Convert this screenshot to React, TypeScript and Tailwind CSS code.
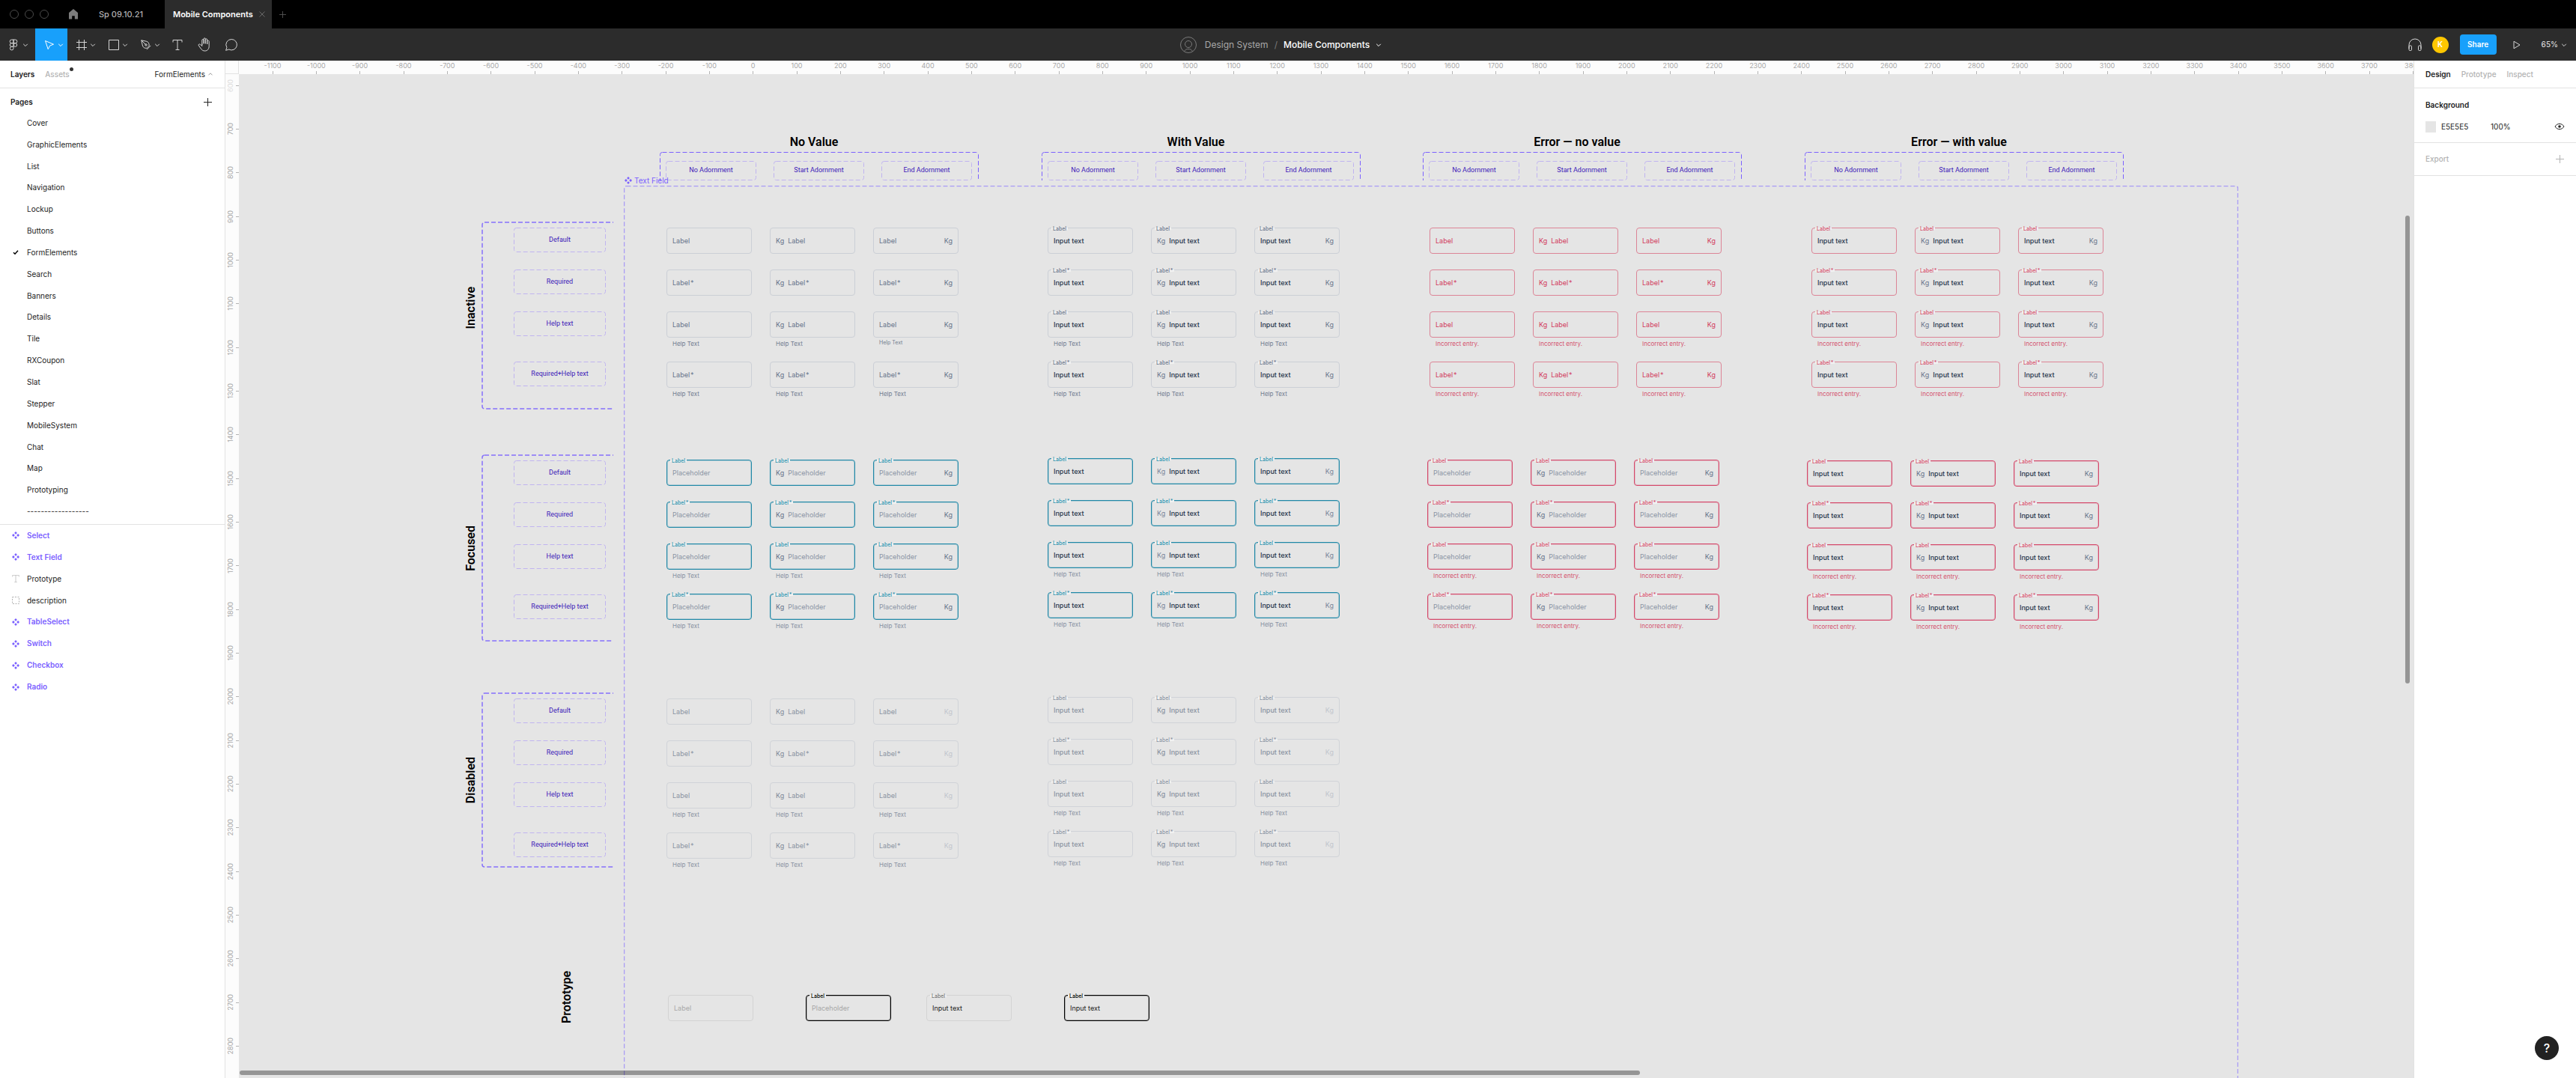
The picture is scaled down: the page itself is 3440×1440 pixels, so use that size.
import React from "react";

const INTER = "font-['Inter','Liberation_Sans',sans-serif]";

/* ---------- icons ---------- */

function Chevron({ className = "", up = false }: { className?: string; up?: boolean }) {
  return (
    <svg viewBox="0 0 8 8" className={"h-2 w-2 shrink-0 " + className} fill="none" stroke="currentColor">
      <path d={up ? "M1.5 5.3 4 2.8l2.5 2.5" : "M1.2 2.8 4 5.6l2.8-2.8"} />
    </svg>
  );
}

function HomeIcon() {
  return (
    <svg viewBox="0 0 14 14" className="h-3.5 w-3.5" fill="currentColor">
      <path d="M7 0 1 5v8.6h4.2V9.2h3.6v4.4H13V5z" />
    </svg>
  );
}

function FigmaIcon() {
  return (
    <svg viewBox="0 0 12 16" className="h-4 w-3" fill="none" stroke="currentColor">
      <path d="M6 1H3.5a2.3 2.3 0 0 0 0 4.7H6zM6 1h2.5a2.3 2.3 0 0 1 0 4.7H6zM6 5.7H3.5a2.3 2.3 0 0 0 0 4.6H6zM6 10.3H3.5A2.3 2.3 0 1 0 6 12.7z" />
      <circle cx="8.4" cy="8" r="2.3" />
    </svg>
  );
}

function MoveIcon() {
  return (
    <svg viewBox="0 0 14 14" className="h-3.5 w-3.5" fill="none" stroke="currentColor" strokeLinejoin="round">
      <path d="M1.5 1.5 12.5 6.2 7.6 8.1 5.2 12.7z" />
    </svg>
  );
}

function FrameIcon() {
  return (
    <svg viewBox="0 0 14 14" className="h-3.5 w-3.5" fill="none" stroke="currentColor">
      <path d="M3.5 0v14M10.5 0v14M0 3.5h14M0 10.5h14" />
    </svg>
  );
}

function ShapeIcon() {
  return (
    <svg viewBox="0 0 14 14" className="h-3.5 w-3.5" fill="none" stroke="currentColor">
      <path d="M.5.5h13v13H.5z" />
    </svg>
  );
}

function PenIcon() {
  return (
    <svg viewBox="0 0 14 14" className="h-3.5 w-3.5" fill="none" stroke="currentColor" strokeLinejoin="round">
      <path d="M.8.8 7.8 2.3c2.4.6 3.6 3 3.3 5.9L8.3 11.3c-3 .4-5.2-.8-5.9-3.3zM.8.8l5.4 5.4M8 13.2l5.3-5.3" />
      <circle cx="7" cy="7" r="1.2" />
    </svg>
  );
}

function TypeIcon({ className = "h-3.5 w-3.5" }: { className?: string }) {
  return (
    <svg viewBox="0 0 14 14" className={className} fill="none" stroke="currentColor">
      <path d="M1 3.5v-3h12v3M7 .5v13M4.5 13.5h5" />
    </svg>
  );
}

function HandIcon() {
  return (
    <svg viewBox="0 0 18 19" className="h-[19px] w-[18px]" fill="none" stroke="currentColor" strokeLinecap="round" strokeLinejoin="round">
      <path d="M5.8 9.5V3.7c0-1.6 2.3-1.6 2.3 0v4.6V2c0-1.6 2.3-1.6 2.3 0v6.3V3c0-1.6 2.3-1.6 2.3 0v6V5.3c0-1.6 2.5-1.5 2.5.1v6.2c0 3.9-2.2 6.4-5.6 6.4-2.6 0-4-1.1-5.2-2.9L1.3 10.9c-.9-1.5 1.1-2.7 2.3-1.5l2.2 2.2V9" />
    </svg>
  );
}

function CommentIcon() {
  return (
    <svg viewBox="0 0 18 18" className="h-[18px] w-[18px]" fill="none" stroke="currentColor" strokeLinejoin="round">
      <path d="M9.2 1.5a7.2 7.2 0 1 1-3.5 13.5L1.6 16.3 2.9 12.5A7.2 7.2 0 0 1 9.2 1.5z" />
    </svg>
  );
}

function PersonIcon() {
  return (
    <svg viewBox="0 0 24 24" className="h-6 w-6" fill="none" stroke="currentColor">
      <circle cx="12" cy="12" r="10.5" />
      <circle cx="12" cy="11" r="4.5" />
      <path d="M6.5 20.8c1.2-2.6 3-3.3 5.5-3.3s4.3.7 5.5 3.3" />
    </svg>
  );
}

function HeadphonesIcon() {
  return (
    <svg viewBox="0 0 18 18" className="h-[18px] w-[18px]" fill="none" stroke="currentColor">
      <path d="M1 14V9a8 8 0 0 1 16 0v5" />
      <rect x="1" y="10" width="3.5" height="6.5" rx="1.2" />
      <rect x="13.5" y="10" width="3.5" height="6.5" rx="1.2" />
    </svg>
  );
}

function PlayIcon() {
  return (
    <svg viewBox="0 0 10 12" className="h-3 w-2.5" fill="none" stroke="currentColor" strokeLinejoin="round">
      <path d="M1 1.2v9.6L9 6z" />
    </svg>
  );
}

function EyeIcon() {
  return (
    <svg viewBox="0 0 14 10" className="h-2.5 w-3.5" fill="none" stroke="currentColor">
      <path d="M1 5c2.7-4.8 9.3-4.8 12 0-2.7 4.8-9.3 4.8-12 0z" />
      <circle cx="7" cy="5" r="1.8" fill="currentColor" stroke="none" />
    </svg>
  );
}

function PlusIcon({ className = "h-[11px] w-[11px]" }: { className?: string }) {
  return (
    <svg viewBox="0 0 11 11" className={className} fill="none" stroke="currentColor">
      <path d="M5.5 0v11M0 5.5h11" />
    </svg>
  );
}

function CloseIcon() {
  return (
    <svg viewBox="0 0 8 8" className="h-2 w-2" fill="none" stroke="currentColor">
      <path d="m.5.5 7 7M7.5.5l-7 7" />
    </svg>
  );
}

function CheckIcon() {
  return (
    <svg viewBox="0 0 8 8" className="h-2 w-2" fill="none" stroke="currentColor" strokeWidth="1.5">
      <path d="M1 4.2 3 6.2 7 1.8" />
    </svg>
  );
}

function ComponentSetIcon() {
  return (
    <svg viewBox="0 0 10 10" className="h-2.5 w-2.5 shrink-0" fill="currentColor">
      <path d="M5 0 6.9 1.9 5 3.8 3.1 1.9zM5 6.2 6.9 8.1 5 10 3.1 8.1zM1.9 3.1 3.8 5 1.9 6.9 0 5zM8.1 3.1 10 5 8.1 6.9 6.2 5z" />
    </svg>
  );
}

function GroupIcon() {
  return (
    <svg viewBox="0 0 10 10" className="h-2.5 w-2.5" fill="none" stroke="currentColor" strokeDasharray="2 1.5">
      <path d="M.5.5h9v9h-9z" />
    </svg>
  );
}

/* ---------- top bars ---------- */

function TabBar() {
  return (
    <div className="flex h-[38px] shrink-0 items-stretch bg-black text-[11px] font-medium">
      <div className="flex w-[79px] items-center gap-2 pl-[13px]">
        {["close", "minimise", "zoom"].map((n) => (
          <button key={n} aria-label={n} className="h-3 w-3 rounded-full border border-[#4a4a4a]" />
        ))}
      </div>
      <button aria-label="Home" className="flex w-[38px] items-center justify-center text-[#7c7c7c]">
        <HomeIcon />
      </button>
      <button className="w-[103px] pl-[15px] text-left text-[#b0b0b0]">Sp 09.10.21</button>
      <div className="flex w-[143px] items-center justify-between bg-[#2c2c2c] pr-[9px] pl-[11px] text-white">
        <button className="font-semibold">Mobile Components</button>
        <button aria-label="Close tab" className="text-[#6a6a6a]">
          <CloseIcon />
        </button>
      </div>
      <button aria-label="New tab" className="pl-2.5 text-[#5c5c5c]">
        <PlusIcon className="h-[9px] w-[9px]" />
      </button>
    </div>
  );
}

const dropTools = [
  { name: "Frame", icon: <FrameIcon /> },
  { name: "Shape", icon: <ShapeIcon /> },
  { name: "Pen", icon: <PenIcon /> },
];
const plainTools = [
  { name: "Text", icon: <TypeIcon /> },
  { name: "Hand", icon: <HandIcon /> },
  { name: "Comment", icon: <CommentIcon /> },
];

function Toolbar() {
  return (
    <div className="flex h-[43px] shrink-0 items-stretch bg-[#2c2c2c] text-[#d6d6d6]">
      <div className="flex flex-1 items-stretch">
        <button aria-label="Main menu" className="flex w-[47px] items-center gap-1.5 pl-3">
          <FigmaIcon />
          <Chevron />
        </button>
        <button aria-label="Move" className="flex w-[43px] items-center gap-1 bg-[#18a0fb] pl-3 text-white">
          <MoveIcon />
          <Chevron />
        </button>
        {dropTools.map((t) => (
          <button key={t.name} aria-label={t.name} className="flex w-[43px] items-center gap-1 pl-3">
            {t.icon}
            <Chevron />
          </button>
        ))}
        {plainTools.map((t) => (
          <button key={t.name} aria-label={t.name} className="flex w-9 items-center justify-center">
            {t.icon}
          </button>
        ))}
      </div>
      <div className="flex items-center pr-2 text-xs">
        <span className="text-[#7a7a7a]">
          <PersonIcon />
        </span>
        <a href="#project" className="ml-2.5 text-[#a8a8a8]">Design System</a>
        <span className="mx-2 text-[#7a7a7a]">/</span>
        <button className="flex items-center gap-2 font-medium text-white">
          Mobile Components
          <Chevron />
        </button>
      </div>
      <div className="flex flex-1 items-center justify-end pr-3">
        <button aria-label="Audio">
          <HeadphonesIcon />
        </button>
        <span className="ml-3.5 flex h-[22px] w-[22px] items-center justify-center rounded-full bg-[#ffc700] text-[10px] font-semibold text-white">K</span>
        <button className="ml-[15px] h-[27px] w-[49px] rounded bg-[#18a0fb] text-[10px] font-semibold text-white">Share</button>
        <button aria-label="Present" className="ml-[22px]">
          <PlayIcon />
        </button>
        <button className="ml-7 flex items-center gap-1 text-[10px] font-medium">
          65%
          <Chevron />
        </button>
      </div>
    </div>
  );
}

/* ---------- side panels ---------- */

const pages = [
  "Cover", "GraphicElements", "List", "Navigation", "Lockup", "Buttons", "FormElements", "Search", "Banners",
  "Details", "Tile", "RXCoupon", "Slat", "Stepper", "MobileSystem", "Chat", "Map", "Prototyping", "------------------",
];

const layers: { name: string; kind: "set" | "text" | "group" }[] = [
  { name: "Select", kind: "set" },
  { name: "Text Field", kind: "set" },
  { name: "Prototype", kind: "text" },
  { name: "description", kind: "group" },
  { name: "TableSelect", kind: "set" },
  { name: "Switch", kind: "set" },
  { name: "Checkbox", kind: "set" },
  { name: "Radio", kind: "set" },
];

function LeftPanel() {
  return (
    <aside className="w-[301px] shrink-0 border-r border-[#e2e2e2] bg-white text-[10px] text-[#222]">
      <div className="flex h-[37px] items-center border-b border-[#e2e2e2] pr-[15px] pl-3.5">
        <button className="font-semibold">Layers</button>
        <button className="relative ml-3.5 font-medium text-[#b3b3b3]">
          Assets
          <span className="absolute -top-0.5 -right-[5px] h-[5px] w-[5px] rounded-full bg-[#333]" />
        </button>
        <button className="ml-auto flex items-center gap-[3px]">
          FormElements
          <Chevron up className="text-[#999]" />
        </button>
      </div>
      <div className="border-b border-[#e2e2e2] pb-0.5">
        <div className="flex h-8 items-center justify-between pt-1 pr-[17px] pl-3.5">
          <h2 className="font-semibold">Pages</h2>
          <button aria-label="Add page">
            <PlusIcon />
          </button>
        </div>
        <ul className="grid h-[548px] auto-rows-fr">
          {pages.map((p) => (
            <li key={p} className="flex">
              <button className="flex flex-1 items-center text-left">
                <span className="flex w-9 justify-center pl-1.5 text-black">{p === "FormElements" && <CheckIcon />}</span>
                {p}
              </button>
            </li>
          ))}
        </ul>
      </div>
      <ul className="grid h-[231px] auto-rows-fr">
        {layers.map((l) => (
          <li key={l.name} className="flex">
            <button
              className={l.kind === "set" ? "flex flex-1 items-center font-semibold text-[#7b61ff]" : "flex flex-1 items-center"}
            >
              <span className={l.kind === "set" ? "flex w-9 justify-center pl-1.5" : "flex w-9 justify-center pl-1.5 text-[#b3b3b3]"}>
                {l.kind === "set" && <ComponentSetIcon />}
                {l.kind === "text" && <TypeIcon className="h-2.5 w-2.5" />}
                {l.kind === "group" && <GroupIcon />}
              </span>
              {l.name}
            </button>
          </li>
        ))}
      </ul>
    </aside>
  );
}

function RightPanel() {
  return (
    <aside className="w-[217px] shrink-0 border-l border-[#e2e2e2] bg-white text-[10px] text-[#222]">
      <div className="flex h-[37px] items-center gap-3.5 border-b border-[#e2e2e2] pl-[15px] font-medium text-[#b3b3b3]">
        <button className="font-semibold text-[#222]">Design</button>
        <button>Prototype</button>
        <button>Inspect</button>
      </div>
      <section className="h-[73px] border-b border-[#e2e2e2] pt-3.5 pr-[15px] pl-[15px]">
        <h2 className="leading-4 font-semibold">Background</h2>
        <div className="mt-3 flex h-[18px] items-center">
          <button aria-label="Background colour" className="h-[15px] w-3.5 bg-[#e5e5e5]" />
          <input aria-label="Hex" defaultValue="E5E5E5" className="ml-[7px] w-[66px] bg-transparent" />
          <input aria-label="Opacity" defaultValue="100%" className="w-[50px] bg-transparent" />
          <button aria-label="Toggle visibility" className="ml-auto">
            <EyeIcon />
          </button>
        </div>
      </section>
      <section className="flex h-11 items-center justify-between border-b border-[#e2e2e2] pr-4 pl-[15px] text-[#b3b3b3]">
        <h2 className="font-medium">Export</h2>
        <button aria-label="Add export">
          <PlusIcon />
        </button>
      </section>
    </aside>
  );
}

/* ---------- rulers ---------- */

const RULER_STEP = 175 / 3;
const range = (from: number, to: number) => Array.from({ length: (to - from) / 100 + 1 }, (_, i) => from + i * 100);

function HorizontalRuler() {
  return (
    <div className="relative h-[18px] flex-1 overflow-hidden bg-[#fcfcfc] text-[9px] leading-3.5 text-[#a8a8a8]">
      {range(-1100, 3800).map((v, i) => (
        <div key={v} className="absolute inset-y-0 flex w-10 -translate-x-1/2 flex-col items-center justify-between" style={{ left: 45 + i * RULER_STEP }}>
          {v}
          <span className="h-1 w-px bg-[#b3b3b3]" />
        </div>
      ))}
    </div>
  );
}

function VerticalRuler() {
  return (
    <div className="relative w-[18px] shrink-0 overflow-hidden bg-[#fcfcfc] text-[9px] leading-3.5 text-[#a8a8a8]">
      {range(600, 2800).map((v, i) => (
        <div key={v} className="absolute inset-x-0 flex h-10 -translate-y-1/2 items-center justify-between" style={{ top: 15 + i * RULER_STEP }}>
          <span className={v === 600 ? "rotate-180 text-[#dcdcdc] [writing-mode:vertical-rl]" : "rotate-180 [writing-mode:vertical-rl]"}>{v}</span>
          <span className="h-px w-1 bg-[#b3b3b3]" />
        </div>
      ))}
    </div>
  );
}

/* ---------- canvas ---------- */

function Dashed({ shape, className, heavy = false }: { shape: "box" | "top" | "left"; className: string; heavy?: boolean }) {
  return (
    <svg
      className={"pointer-events-none absolute inset-0 h-full w-full overflow-hidden " + className}
      fill="none"
      stroke="currentColor"
      strokeWidth={heavy ? 1.5 : 1}
      strokeDasharray="6 3"
    >
      {shape === "box" && <rect x="0.5" y="0.5" width="calc(100% - 1px)" height="calc(100% - 1px)" rx="3" />}
      {shape === "top" && <rect x="0.5" y="0.5" width="calc(100% - 1px)" height="200%" rx="3" />}
      {shape === "left" && <rect x="1" y="1" width="200%" height="calc(100% - 2px)" rx="3" />}
    </svg>
  );
}

function Chip({ children, className }: { children: React.ReactNode; className: string }) {
  return (
    <div className={"relative flex items-center justify-center text-[9px] text-[#3c18b8] " + className}>
      <Dashed shape="box" className="text-[#c0b4f0]" />
      {children}
    </div>
  );
}

function ColumnHeader({ title, x, y }: { title: string; x: number; y: number }) {
  return (
    <div className="absolute w-[426px] font-['Roboto',sans-serif]" style={{ left: x, top: y }}>
      <h3 className="mb-[3px] pr-3.5 text-center text-base leading-5 font-semibold text-black">{title}</h3>
      <div className="relative flex h-[38px] gap-[23px] pt-3 pl-2">
        <Dashed shape="top" className="text-[#7b61ff]" />
        {["No Adornment", "Start Adornment", "End Adornment"].map((t) => (
          <Chip key={t} className="h-[26px] w-[121px]">{t}</Chip>
        ))}
      </div>
    </div>
  );
}

const ROWS = "grid-rows-[56px_56px_67px_auto]";

function RowHeader({ title, x, y, size, labelClass = "" }: { title: string; x: number; y: number; size: string; labelClass?: string }) {
  return (
    <div className={"absolute flex items-center gap-1 font-['Roboto',sans-serif] " + size} style={{ left: x, top: y }}>
      <h3 className={"w-5 rotate-180 text-center text-base leading-5 font-semibold text-black [writing-mode:vertical-rl] " + labelClass}>{title}</h3>
      <div className={"relative grid h-full w-[176px] pt-2 pl-[43px] " + ROWS}>
        <Dashed shape="left" heavy className="text-[#8570fb]" />
        {["Default", "Required", "Help text", "Required+Help text"].map((t) => (
          <Chip key={t} className="h-[33px] w-[123px]">{t}</Chip>
        ))}
      </div>
    </div>
  );
}

type Theme = { border: string; text: string; adorn: string; endAdorn?: string; label: string; help: string };

const TEAL = "border-[#1f88a7] shadow-[inset_0_0_0_1px_#1f88a740]";
const RED = "border-[#d5486a] shadow-[inset_0_0_0_1px_#d5486a40]";
const BLACK = "border-black shadow-[inset_0_0_0_1px_#00000040]";

const themes: Record<string, Theme> = {
  inactive: { border: "border-[#cbcfd6]", text: "placeholder:text-[#66738a]", adorn: "text-[#66738a]", label: "", help: "text-[#727d90]" },
  inactiveValue: { border: "border-[#cbcfd6]", text: "text-[#26344a] font-medium", adorn: "text-[#6b768c]", label: "text-[#6b768c]", help: "text-[#727d90]" },
  inactiveError: { border: "border-[#dc8496]", text: "placeholder:text-[#d23a5c]", adorn: "text-[#d23a5c]", label: "", help: "text-[#d4506c]" },
  inactiveErrorValue: { border: "border-[#dc8496]", text: "text-[#26344a] font-medium", adorn: "text-[#6b768c]", label: "text-[#d4506c]", help: "text-[#d4506c]" },
  focused: { border: TEAL, text: "placeholder:text-[#8a94a4]", adorn: "text-[#66738a]", label: "text-[#2f93ae]", help: "text-[#8791a1]" },
  focusedValue: { border: TEAL, text: "text-[#26344a] font-medium", adorn: "text-[#7b869a]", label: "text-[#2f93ae]", help: "text-[#8791a1]" },
  focusedError: { border: RED, text: "placeholder:text-[#8a94a4]", adorn: "text-[#66738a]", label: "text-[#d6506d]", help: "text-[#d4506c]" },
  focusedErrorValue: { border: RED, text: "text-[#26344a] font-medium", adorn: "text-[#66738a]", label: "text-[#d6506d]", help: "text-[#d4506c]" },
  disabled: { border: "border-[#d0d3d8]", text: "placeholder:text-[#8a93a1]", adorn: "text-[#7f8998]", endAdorn: "text-[#c2c6cd]", label: "", help: "text-[#8a93a1]" },
  disabledValue: { border: "border-[#d0d3d8]", text: "text-[#8a93a1] font-medium", adorn: "text-[#7f8998]", endAdorn: "text-[#c2c6cd]", label: "text-[#8a93a1]", help: "text-[#8a93a1]" },
  protoEmpty: { border: "border-[#d3d3d3]", text: "placeholder:text-[#a8a8a8]", adorn: "", label: "", help: "" },
  protoFocus: { border: BLACK, text: "placeholder:text-[#a5a5a5]", adorn: "", label: "text-black", help: "" },
  protoValue: { border: "border-[#d3d3d3]", text: "text-[#222]", adorn: "", label: "text-[#777]", help: "" },
  protoFocusValue: { border: BLACK, text: "text-[#222]", adorn: "", label: "text-black", help: "" },
};

function Field(props: {
  theme: Theme; floating?: string; value?: string; placeholder?: string; start?: boolean; end?: boolean; help?: string; smallHelp?: boolean;
}) {
  const { theme, floating, value, placeholder, start, end, help, smallHelp } = props;
  return (
    <div className="w-[114px] text-[9px]">
      <label className="relative block">
        <span className={"flex h-[35px] items-center rounded-[4px] border px-[7px] " + theme.border}>
          {start && <span className={"mr-[5px] " + theme.adorn}>Kg</span>}
          <input
            readOnly
            aria-label={floating ?? placeholder}
            value={value ?? ""}
            placeholder={placeholder}
            className={"min-w-0 flex-1 bg-transparent outline-none placeholder:opacity-100 " + theme.text}
          />
          {end && <span className={theme.endAdorn ?? theme.adorn}>Kg</span>}
        </span>
        {floating && (
          <span className={"absolute -top-0.5 left-[5px] bg-[linear-gradient(#e5e5e5_2px,#f1f1f1_2px,#f1f1f1_5px,#e5e5e5_5px)] px-0.5 text-[7px] leading-[8px] font-medium " + theme.label}>
            {floating}
          </span>
        )}
      </label>
      {help && <p className={(smallHelp ? "pl-2 text-[7px] leading-3.5 " : "pl-2 text-[8px] leading-4 ") + theme.help}>{help}</p>}
    </div>
  );
}

function FieldBlock({ x, y, theme, kind, help = "Help Text", smallLast = false }: {
  x: number; y: number; theme: Theme; kind: "label" | "placeholder" | "value"; help?: string; smallLast?: boolean;
}) {
  return (
    <div className={"absolute grid grid-cols-[114px_114px_114px] gap-x-6 " + ROWS} style={{ left: x, top: y }}>
      {[0, 1, 2, 3].map((row) =>
        [0, 1, 2].map((col) => {
          const name = row % 2 === 1 ? "Label\u200a*" : "Label";
          return (
            <Field
              key={row + "-" + col}
              theme={theme}
              floating={kind === "label" ? undefined : name}
              value={kind === "value" ? "Input text" : undefined}
              placeholder={kind === "label" ? name : kind === "placeholder" ? "Placeholder" : undefined}
              start={col === 1}
              end={col === 2}
              help={row > 1 ? help : undefined}
              smallHelp={smallLast && row === 2 && col === 2}
            />
          );
        }),
      )}
    </div>
  );
}

const ERR = "Incorrect entry.";

function Canvas() {
  return (
    <div className="relative flex-1 overflow-hidden bg-[#e5e5e5]">
      <ColumnHeader title="No Value" x={562} y={81} />
      <ColumnHeader title="With Value" x={1072} y={81} />
      <ColumnHeader title="Error — no value" x={1581} y={81} />
      <ColumnHeader title="Error — with value" x={2091} y={81} />

      <div className="absolute top-[149px] left-[514px] h-[1400px] w-[2156px]">
        <Dashed shape="box" heavy className="text-[#a99bf5]" />
      </div>
      <span className="absolute top-[135px] left-[515px] flex items-center gap-[3px] text-[10px] leading-3.5 text-[#7b61ff]">
        <ComponentSetIcon />
        Text Field
      </span>

      <RowHeader title="Inactive" x={300} y={197} size="h-[251px]" labelClass="pt-5" />
      <RowHeader title="Focused" x={300} y={508} size="h-[250px]" />
      <RowHeader title="Disabled" x={300} y={826} size="h-[234px]" />

      <FieldBlock x={571} y={205} theme={themes.inactive} kind="label" smallLast />
      <FieldBlock x={1080} y={205} theme={themes.inactiveValue} kind="value" />
      <FieldBlock x={1590} y={205} theme={themes.inactiveError} kind="label" help={ERR} />
      <FieldBlock x={2100} y={205} theme={themes.inactiveErrorValue} kind="value" help={ERR} />

      <FieldBlock x={571} y={515} theme={themes.focused} kind="placeholder" />
      <FieldBlock x={1080} y={513} theme={themes.focusedValue} kind="value" />
      <FieldBlock x={1587} y={515} theme={themes.focusedError} kind="placeholder" help={ERR} />
      <FieldBlock x={2094} y={516} theme={themes.focusedErrorValue} kind="value" help={ERR} />

      <FieldBlock x={571} y={834} theme={themes.disabled} kind="label" />
      <FieldBlock x={1080} y={832} theme={themes.disabledValue} kind="value" />

      <h3 className="absolute top-[1193px] left-[428px] h-20 w-5 rotate-180 text-center font-['Roboto',sans-serif] text-base leading-5 font-semibold text-black [writing-mode:vertical-rl]">
        Prototype
      </h3>
      <div className="absolute top-[1230px] left-[573px] flex">
        <Field theme={themes.protoEmpty} placeholder="Label" />
        <div className="ml-[70px] flex gap-[47px]">
          <Field theme={themes.protoFocus} floating="Label" placeholder="Placeholder" />
          <Field theme={themes.protoValue} floating="Label" value="Input text" />
        </div>
        <div className="ml-[70px]">
          <Field theme={themes.protoFocusValue} floating="Label" value="Input text" />
        </div>
      </div>

      <div className="absolute top-[189px] right-[5px] h-[625px] w-1.5 rounded-full bg-black/35" />
      <div className="absolute bottom-1 left-px h-1.5 w-[1870px] rounded-full bg-black/35" />
    </div>
  );
}

export default function App() {
  return (
    <div className={"flex h-screen flex-col overflow-hidden " + INTER}>
      <TabBar />
      <Toolbar />
      <div className="flex min-h-0 flex-1">
        <LeftPanel />
        <main className="flex min-w-0 flex-1 flex-col">
          <div className="flex">
            <div className="h-[18px] w-[18px] shrink-0 border-r border-b border-[#e2e2e2] bg-[#fcfcfc]" />
            <HorizontalRuler />
          </div>
          <div className="flex min-h-0 flex-1">
            <VerticalRuler />
            <Canvas />
          </div>
        </main>
        <RightPanel />
      </div>
      <button aria-label="Help" className="fixed right-[23px] bottom-6 flex h-8 w-8 items-center justify-center rounded-full bg-[#222] text-base font-medium text-white">
        ?
      </button>
    </div>
  );
}
